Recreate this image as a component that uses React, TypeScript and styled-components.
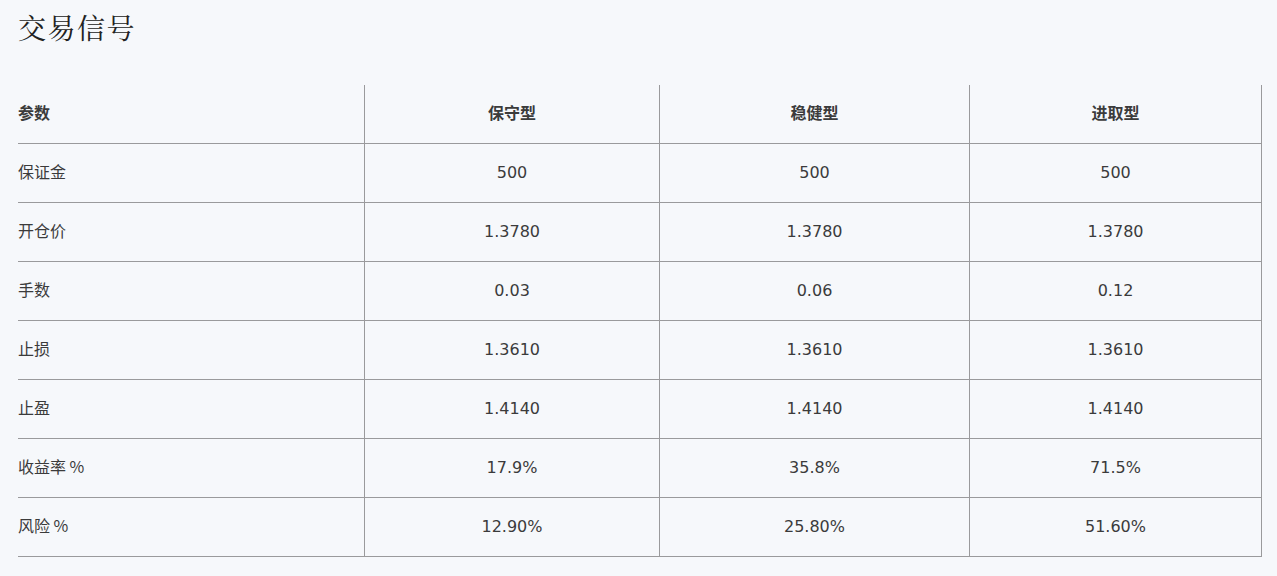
import React from "react";
import styled, { createGlobalStyle } from "styled-components";

const GlobalStyle = createGlobalStyle`
  html, body {
    margin: 0;
    padding: 0;
    background: #f6f8fb;
  }
  body {
    font-family: "DejaVu Sans", "Noto Sans CJK SC", sans-serif;
    color: #3b3b3b;
  }
`;

const Page = styled.div`
  padding: 7px 0 0 18px;
  box-sizing: border-box;
  width: 1277px;
`;

const Title = styled.h1`
  margin: 0 0 38px 0;
  font-family: "Noto Serif CJK SC", "Noto Sans CJK SC", serif;
  font-size: 28px;
  line-height: 40px;
  font-weight: 400;
  letter-spacing: 1.5px;
  color: #222;
`;

const Grid = styled.div`
  display: grid;
  grid-template-columns: 346px 295px 310px 293px;
`;

const Cell = styled.div<{ $first?: boolean; $last?: boolean; $head?: boolean }>`
  box-sizing: border-box;
  height: 59px;
  display: flex;
  align-items: center;
  justify-content: ${(p) => (p.$first ? "flex-start" : "center")};
  border-bottom: 1px solid #9a9a9c;
  border-left: ${(p) => (p.$first ? "none" : "1px solid #9a9a9c")};
  border-right: ${(p) => (p.$last ? "1px solid #9a9a9c" : "none")};
  font-size: 16px;
  line-height: 20px;
  font-weight: ${(p) => (p.$head ? 700 : 400)};
  font-family: ${(p) =>
    p.$first || p.$head
      ? `"Noto Sans CJK SC", sans-serif`
      : `"DejaVu Sans", "Noto Sans CJK SC", sans-serif`};
  color: #3b3b3b;
  padding-bottom: ${(p) => (p.$first || p.$head ? "4px" : "1px")};
`;

const headers = ["参数", "保守型", "稳健型", "进取型"];
const rows: string[][] = [
  ["保证金", "500", "500", "500"],
  ["开仓价", "1.3780", "1.3780", "1.3780"],
  ["手数", "0.03", "0.06", "0.12"],
  ["止损", "1.3610", "1.3610", "1.3610"],
  ["止盈", "1.4140", "1.4140", "1.4140"],
  ["收益率 %", "17.9%", "35.8%", "71.5%"],
  ["风险 %", "12.90%", "25.80%", "51.60%"],
];

export default function App() {
  return (
    <>
      <GlobalStyle />
      <Page>
        <Title>交易信号</Title>
        <Grid>
          {headers.map((h, i) => (
            <Cell key={h} $head $first={i === 0} $last={i === 3}>
              {h}
            </Cell>
          ))}
          {rows.map((r) =>
            r.map((c, i) => (
              <Cell key={r[0] + i} $first={i === 0} $last={i === 3}>
                {c}
              </Cell>
            ))
          )}
        </Grid>
      </Page>
    </>
  );
}
